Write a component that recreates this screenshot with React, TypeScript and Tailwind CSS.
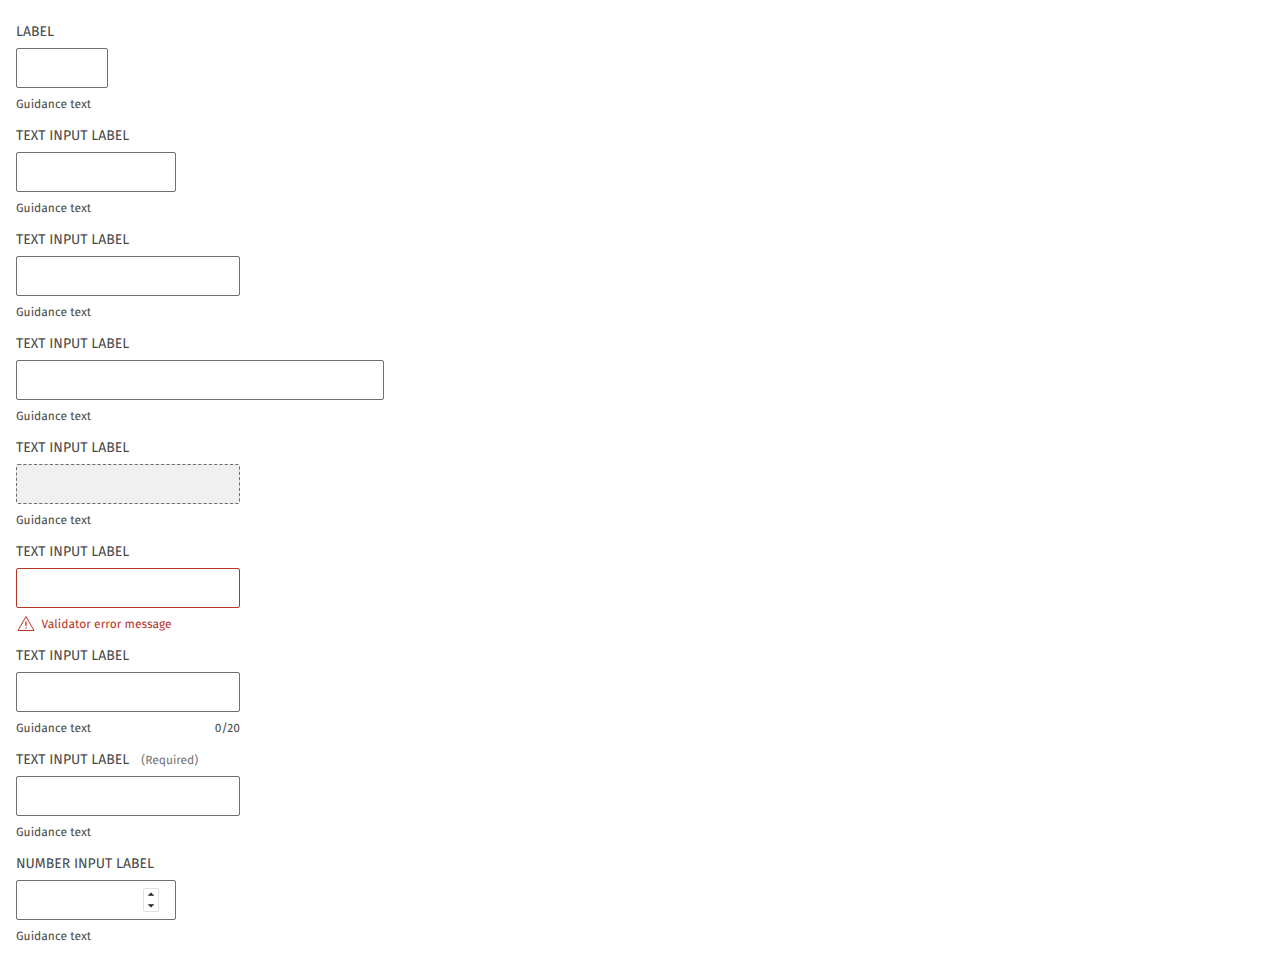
import React from "react";

const box = "h-10 rounded-[2px] border border-[#6f6f6f] bg-white";

type FieldProps = {
  label: string;
  width: string;
  look?: string;
  required?: boolean;
  error?: boolean;
  counter?: string;
  stepper?: boolean;
  dashed?: boolean;
};

function Field({ label, width, look, required, error, counter, stepper, dashed }: FieldProps) {
  return (
    <div className={`flex h-[104px] flex-col ${width}`}>
      <label className="flex h-6 items-center whitespace-nowrap pt-[7px] text-[14px] leading-4">
        <span>{label}</span>
        {required && <span className="ml-3 pt-0.5 text-[12px] text-[#757575]">(Required)</span>}
      </label>
      <div className={`mt-2 flex items-center justify-end ${look ?? box}`}>
        {dashed && (
          <svg width="224" height="40" viewBox="0 0 224 40" fill="none" stroke="#6f6f6f" strokeDasharray="3.2 2.1">
            <rect x="0.5" y="0.5" width="223" height="39" rx="1.5" />
          </svg>
        )}
        {stepper && (
          <div className="mr-4 flex h-6 w-4 flex-col items-center justify-center gap-2 rounded-[2px] border border-[#e0e0e0]">
            <svg width="8" height="4" viewBox="0 0 8 4"><path d="M.7 3.7L4 .4L7.3 3.7Z" fill="#222" /></svg>
            <svg width="8" height="4" viewBox="0 0 8 4"><path d="M.7 .3L4 3.6L7.3 .3Z" fill="#222" /></svg>
          </div>
        )}
      </div>
      <div className="mt-2 flex h-[18px] items-center justify-between whitespace-nowrap text-[12px] leading-[18px] tracking-[0.04px]">
        {error ? (
          <div className="flex items-center text-[#b8352a]">
            <svg className="mb-0.5 ml-px mr-[6.5px]" width="18" height="16" viewBox="0 0 18 16" fill="none" stroke="currentColor">
              <path d="M9 0.5L17 14.5H1Z" strokeLinejoin="round" />
              <path d="M9 5.5v4.5M9 11.3v1.3" strokeWidth="1.3" />
            </svg>
            <span>Validator error message</span>
          </div>
        ) : <span>Guidance text</span>}
        {counter && <span>{counter}</span>}
      </div>
    </div>
  );
}

export default function App() {
  return (
    <main className="flex flex-col bg-white px-4 pt-4 font-['Fira_Sans','Noto_Sans',sans-serif] text-[#4a4a4a] antialiased [text-rendering:geometricPrecision]">
      <Field label="LABEL" width="w-[92px]" />
      <Field label="TEXT INPUT LABEL" width="w-40" />
      <Field label="TEXT INPUT LABEL" width="w-56" />
      <Field label="TEXT INPUT LABEL" width="w-[368px]" />
      <Field label="TEXT INPUT LABEL" width="w-56" look="h-10 rounded-[2px] bg-[#f0f0f0]" dashed />
      <Field label="TEXT INPUT LABEL" width="w-56" look="h-10 rounded-[2px] border border-[#b8352a]" error />
      <Field label="TEXT INPUT LABEL" width="w-56" counter="0/20" />
      <Field label="TEXT INPUT LABEL" width="w-56" required />
      <Field label="NUMBER INPUT LABEL" width="w-40" stepper />
    </main>
  );
}
